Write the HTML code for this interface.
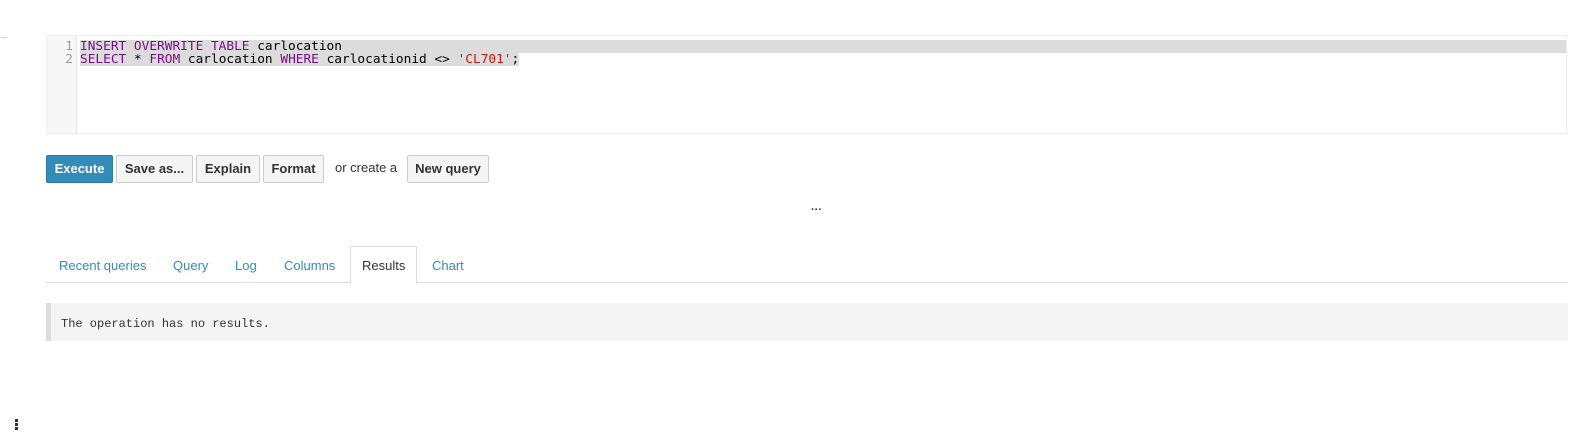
<!DOCTYPE html>
<html><head><style>
body{margin:0;width:1592px;height:447px;background:#fff;position:relative;font-family:"Liberation Sans",sans-serif;overflow:hidden}
.ed{position:absolute;left:46px;top:35px;width:1521px;height:99px;border:1px solid #eee;box-sizing:border-box;background:#fff}
.gut{position:absolute;left:0;top:0;width:29px;height:100%;background:#f7f7f7;border-right:1px solid #e4e4e4}
.ln{position:absolute;right:3px;font:12.8px/13px "DejaVu Sans Mono",monospace;color:#999}
.code{position:absolute;left:33px;font:12.8px/13px "DejaVu Sans Mono",monospace;color:#000;white-space:pre}
.k{color:#7a0c8c}.s{color:#c41a16}
.hl{background:#dcdcdc}
.btn{position:absolute;top:155px;height:28px;box-sizing:border-box;border:1px solid #ccc;background:#f5f5f5;font-weight:bold;font-size:13px;color:#333;text-align:center;line-height:26px;border-radius:2px}
.tab{position:absolute;top:258px;font-size:13px;color:#338bb8}
.res{position:absolute;left:61px;top:317px;font:12px "Liberation Mono",monospace;color:#333}
</style></head><body>
<div style="position:absolute;left:0;top:37px;width:7px;height:1px;background:#ccc"></div>
<div class="ed">
<div class="gut"><div class="ln" style="top:4px">1</div><div class="ln" style="top:17px">2</div></div>
<div style="position:absolute;left:33px;top:4px;right:0;height:13px;background:#dcdcdc"></div>
<div class="code" style="top:4px"><span class="k">INSERT OVERWRITE TABLE</span> carlocation</div>
<div class="code hl" style="top:17px"><span class="k">SELECT</span> * <span class="k">FROM</span> carlocation <span class="k">WHERE</span> carlocationid &lt;&gt; <span class="s">'CL701'</span>;</div>
</div>
<div class="btn" style="left:46px;width:67px;background:#338bb8;border-color:#2a7aa3;color:#fff">Execute</div>
<div class="btn" style="left:116px;width:77px">Save as...</div>
<div class="btn" style="left:196px;width:64px">Explain</div>
<div class="btn" style="left:263px;width:61px">Format</div>
<div style="position:absolute;left:335px;top:160px;font-size:13px;color:#333">or create a</div>
<div class="btn" style="left:407px;width:82px">New query</div>
<div style="position:absolute;left:811px;top:204px;font-size:11px;color:#333;font-weight:bold">···</div>
<div style="position:absolute;left:46px;top:282px;width:1522px;height:1px;background:#ddd"></div>
<div style="position:absolute;left:350px;top:246px;width:67px;height:38px;box-sizing:border-box;border:1px solid #ddd;border-bottom:none;background:#fff"></div>
<div class="tab" style="left:59px">Recent queries</div>
<div class="tab" style="left:173px">Query</div>
<div class="tab" style="left:235px">Log</div>
<div class="tab" style="left:284px">Columns</div>
<div class="tab" style="left:362px;color:#333">Results</div>
<div class="tab" style="left:432px">Chart</div>
<div style="position:absolute;left:46px;top:303px;width:1522px;height:38px;background:#f4f4f4;border-left:5px solid #ddd;box-sizing:border-box"></div>
<div class="res">The operation has no results.</div>
<div style="position:absolute;left:15px;top:419px;width:3px;height:3px;background:#333;box-shadow:0 4px 0 #333,0 8px 0 #333"></div>
</body></html>
